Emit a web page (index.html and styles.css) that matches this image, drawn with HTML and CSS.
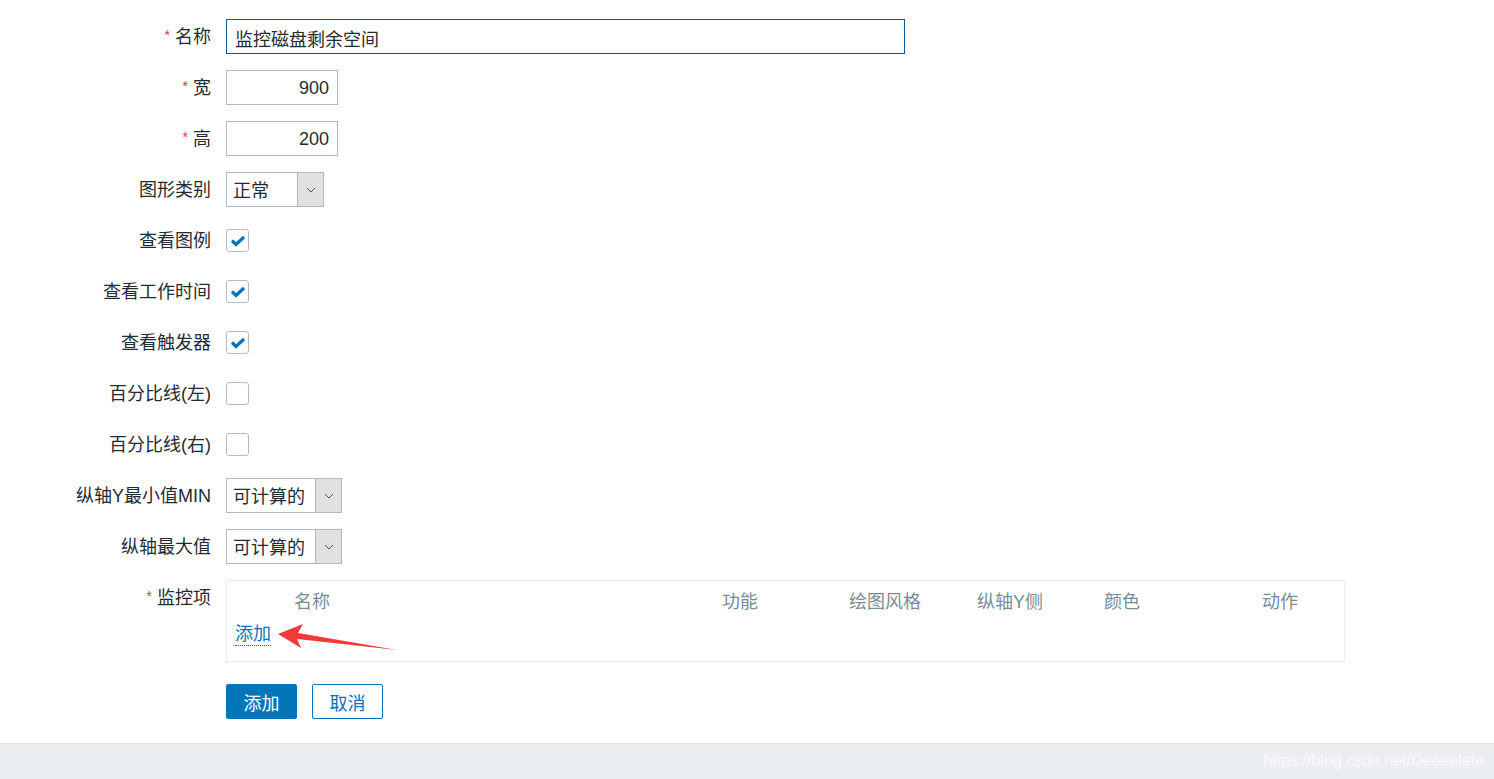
FILE: index.html
```html
<!DOCTYPE html>
<html lang="zh">
<head>
    <meta charset="UTF-8">
    <title>图形</title>
    <link rel="stylesheet" href="styles.css">
</head>
<body>
    <div class="page">
        <form class="form">
            <label class="lbl"><span class="req">*</span>名称</label>
            <div class="fld"><input class="txt focus wide" type="text" value="监控磁盘剩余空间"></div>

            <label class="lbl"><span class="req">*</span>宽</label>
            <div class="fld"><input class="txt num" type="text" value="900"></div>

            <label class="lbl"><span class="req">*</span>高</label>
            <div class="fld"><input class="txt num" type="text" value="200"></div>

            <label class="lbl">图形类别</label>
            <div class="fld">
                <div class="sel s1"><span class="sel-val">正常</span><span class="sel-btn"><svg width="10" height="6" viewBox="0 0 10 6"><path d="M1 1 L5 5 L9 1" fill="none" stroke="#555" stroke-width="1"/></svg></span></div>
            </div>

            <label class="lbl">查看图例</label>
            <div class="fld"><span class="chk on"><svg width="16" height="12" viewBox="0 0 16 12"><path d="M2 5.5 L6 9.5 L14 2" fill="none" stroke="#0275b8" stroke-width="3.2"/></svg></span></div>

            <label class="lbl">查看工作时间</label>
            <div class="fld"><span class="chk on"><svg width="16" height="12" viewBox="0 0 16 12"><path d="M2 5.5 L6 9.5 L14 2" fill="none" stroke="#0275b8" stroke-width="3.2"/></svg></span></div>

            <label class="lbl">查看触发器</label>
            <div class="fld"><span class="chk on"><svg width="16" height="12" viewBox="0 0 16 12"><path d="M2 5.5 L6 9.5 L14 2" fill="none" stroke="#0275b8" stroke-width="3.2"/></svg></span></div>

            <label class="lbl">百分比线(左)</label>
            <div class="fld"><span class="chk"></span></div>

            <label class="lbl">百分比线(右)</label>
            <div class="fld"><span class="chk"></span></div>

            <label class="lbl">纵轴Y最小值MIN</label>
            <div class="fld">
                <div class="sel s2"><span class="sel-val">可计算的</span><span class="sel-btn"><svg width="10" height="6" viewBox="0 0 10 6"><path d="M1 1 L5 5 L9 1" fill="none" stroke="#555" stroke-width="1"/></svg></span></div>
            </div>

            <label class="lbl">纵轴最大值</label>
            <div class="fld">
                <div class="sel s2"><span class="sel-val">可计算的</span><span class="sel-btn"><svg width="10" height="6" viewBox="0 0 10 6"><path d="M1 1 L5 5 L9 1" fill="none" stroke="#555" stroke-width="1"/></svg></span></div>
            </div>

            <label class="lbl top"><span class="req">*</span>监控项</label>
            <div class="fld">
                <div class="items">
                    <div class="items-head">
                        <span class="c-name">名称</span>
                        <span class="c-func">功能</span>
                        <span class="c-style">绘图风格</span>
                        <span class="c-axis">纵轴Y侧</span>
                        <span class="c-color">颜色</span>
                        <span class="c-act">动作</span>
                    </div>
                    <a class="link" href="#">添加</a>
                </div>
                <svg class="arrow" width="130" height="40" viewBox="0 0 130 40">
                    <polygon points="1,14 26,4 21,13 120,30 20,19 24,28" fill="#f23a3a"/>
                </svg>
            </div>

            <div class="lbl"></div>
            <div class="fld btns">
                <button type="button" class="btn main">添加</button>
                <button type="button" class="btn alt">取消</button>
            </div>
        </form>
    </div>
    <div class="footer">
        <span class="mark">https://blog.csdn.net/Deeeelete</span>
    </div>
</body>
</html>
```

FILE: styles.css
```css
*{margin:0;padding:0;box-sizing:border-box}
body{
    background:#fff;
    font-family:"Liberation Sans","Noto Sans CJK SC",sans-serif;
    font-size:18px;
    color:#1f2c33;
}
.page{
    height:743px;
    padding-top:19px;
}
.form{
    display:grid;
    grid-template-columns:211px 1fr;
    column-gap:15px;
    row-gap:16px;
}
.lbl{
    height:35px;
    line-height:37px;
    text-align:right;
    white-space:nowrap;
}
.lbl.top{
    line-height:37px;
}
.req{
    color:#e33734;
    font-size:14px;
    margin-right:5px;
    position:relative;
    top:-3px;
}
.fld{
    display:flex;
    align-items:center;
    min-height:35px;
    position:relative;
}
.txt{
    height:35px;
    border:1px solid #aebac1;
    font-family:inherit;
    font-size:18px;
    color:#1f2c33;
    padding:2px 8px 0;
    outline:none;
}
.txt.wide{width:679px}
.txt.focus{border-color:#0a5d96}
.txt.num{width:112px;text-align:right}

.sel{
    display:flex;
    height:35px;
    border:1px solid #aebac1;
}
.s1{width:98px}
.s2{width:116px}
.sel-val{
    flex:1;
    line-height:36px;
    padding-left:6px;
}
.sel-btn{
    width:26px;
    background:#e1e1e1;
    border-left:1px solid #aebac1;
    display:flex;
    align-items:center;
    justify-content:center;
}
.chk{
    width:23px;
    height:23px;
    border:1px solid #b3bdc3;
    border-radius:3px;
    display:flex;
    align-items:center;
    justify-content:center;
}
.items{
    width:1119px;
    height:82px;
    border:1px solid #ebeef0;
    padding:0 8px;
}
.items-head{
    display:flex;
    height:37px;
    align-items:center;
    color:#768d99;
}
.items-head span{display:block}
.c-name{margin-left:59px;width:428px}
.c-func{width:127px}
.c-style{width:128px}
.c-axis{width:127px}
.c-color{width:158px}
.link{
    display:inline-block;
    color:#0275b8;
    text-decoration:none;
    border-bottom:1px dotted #0275b8;
    line-height:22px;
    margin-top:5px;
}
.arrow{
    position:absolute;
    left:51px;
    top:40px;
}
.btns{
    margin-top:6px;
    gap:15px;
}
.btn{
    width:71px;
    height:35px;
    border-radius:2px;
    font-family:inherit;
    font-size:18px;
}
.btn.main{
    background:#0275b8;
    border:1px solid #0275b8;
    color:#fff;
}
.btn.alt{
    background:#fff;
    border:1px solid #0275b8;
    color:#0275b8;
}
.footer{
    height:36px;
    background:#ebeef0;
    border-top:1px solid #dde1e4;
    text-align:right;
    padding-right:10px;
}
.mark{
    line-height:34px;
    font-size:16px;
    color:#f9fafb;
}
```
